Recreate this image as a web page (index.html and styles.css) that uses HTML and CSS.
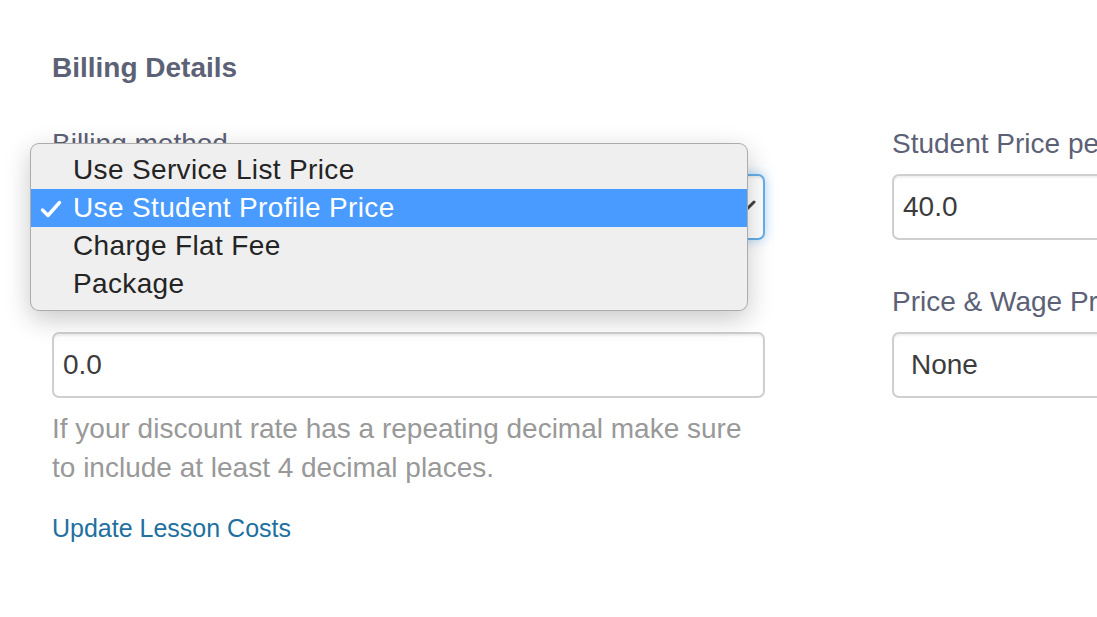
FILE: index.html
```html
<!DOCTYPE html>
<html lang="en">
<head>
<meta charset="utf-8">
<title>Billing Details</title>
<link rel="stylesheet" href="styles.css">
</head>
<body>
<div class="page">
  <h2 class="section-title">Billing Details</h2>
  <div class="cols">
    <div class="col">
      <div class="form-group">
        <label class="label">Billing method</label>
        <div class="select-wrap">
          <div class="control select focused">
            <svg class="chevron" width="22" height="14" viewBox="0 0 22 14"><path d="M2 2 L11 11 L20 2" fill="none" stroke="#444" stroke-width="3" stroke-linecap="round" stroke-linejoin="round"/></svg>
          </div>
          <ul class="menu">
            <li class="menu-item">Use Service List Price</li>
            <li class="menu-item checked"><svg class="check" width="22" height="18" viewBox="0 0 22 18"><path d="M2.5 10 L8 15.5 L19.5 2.5" fill="none" stroke="#fff" stroke-width="3.4" stroke-linecap="round" stroke-linejoin="round"/></svg>Use Student Profile Price</li>
            <li class="menu-item">Charge Flat Fee</li>
            <li class="menu-item">Package</li>
          </ul>
        </div>
      </div>
      <div class="form-group last">
        <label class="label">Discount Percent</label>
        <div class="control input">0.0</div>
        <p class="help">If your discount rate has a repeating decimal make sure to include at least 4 decimal places.</p>
      </div>
      <a class="link" href="#">Update Lesson Costs</a>
    </div>
    <div class="col">
      <div class="form-group">
        <label class="label">Student Price per Lesson</label>
        <div class="control input">40.0</div>
      </div>
      <div class="form-group">
        <label class="label">Price &amp; Wage Profile</label>
        <div class="control select plain">None</div>
      </div>
    </div>
  </div>
</div>
</body>
</html>
```
FILE: styles.css
```css
html, body {
  margin: 0;
  padding: 0;
  background: #fff;
  overflow: hidden;
  width: 1097px;
  height: 617px;
}
body {
  font-family: "Liberation Sans", Arial, Helvetica, sans-serif;
  font-size: 28px;
  line-height: 40px;
  color: #333;
}
.page {
  padding: 48px 0 0 52px;
  width: 1700px;
}
.section-title {
  margin: 0 0 36px 0;
  font-size: 28px;
  line-height: 40px;
  font-weight: bold;
  color: #5c6176;
}
.cols {
  display: grid;
  grid-template-columns: 713px 713px;
  column-gap: 127px;
  align-items: start;
}
.form-group {
  margin-bottom: 42px;
}
.form-group.last {
  margin-bottom: 0;
}
.label {
  display: block;
  line-height: 40px;
  margin-bottom: 10px;
  color: #5c6176;
}
.control {
  box-sizing: border-box;
  height: 66px;
  border: 2px solid #cfcfcf;
  border-radius: 7px;
  background: #fff;
  box-shadow: inset 0 2px 2px rgba(0,0,0,0.06);
  line-height: 62px;
  padding: 0 9px;
  color: #3c3c3c;
}
.control.plain {
  padding-left: 17px;
}
.select-wrap {
  position: relative;
}
.select {
  position: relative;
}
.select.focused {
  border-color: #66afe9;
  box-shadow: inset 0 2px 2px rgba(0,0,0,0.06), 0 0 12px rgba(102,175,233,0.55);
}
.chevron {
  position: absolute;
  right: 7px;
  top: 24px;
}
.menu {
  position: absolute;
  top: -31px;
  left: -22px;
  width: 718px;
  box-sizing: border-box;
  margin: 0;
  padding: 7px 0;
  list-style: none;
  background: #efefef;
  border: 1px solid rgba(0,0,0,0.28);
  border-radius: 9px;
  box-shadow: 0 8px 26px rgba(0,0,0,0.22);
  z-index: 5;
}
.menu-item {
  position: relative;
  height: 38px;
  line-height: 38px;
  padding-left: 42px;
  color: #242424;
  font-size: 28px;
  letter-spacing: 0.35px;
}
.menu-item.checked {
  background: #4a9bff;
  color: #fff;
}
.check {
  position: absolute;
  left: 9px;
  top: 11px;
}
.help {
  margin: 11px 0 0 0;
  line-height: 39px;
  color: #999;
  width: 713px;
}
.link {
  display: block;
  margin-top: 23px;
  font-size: 25px;
  line-height: 36px;
  color: #22709f;
  text-decoration: none;
}
```
